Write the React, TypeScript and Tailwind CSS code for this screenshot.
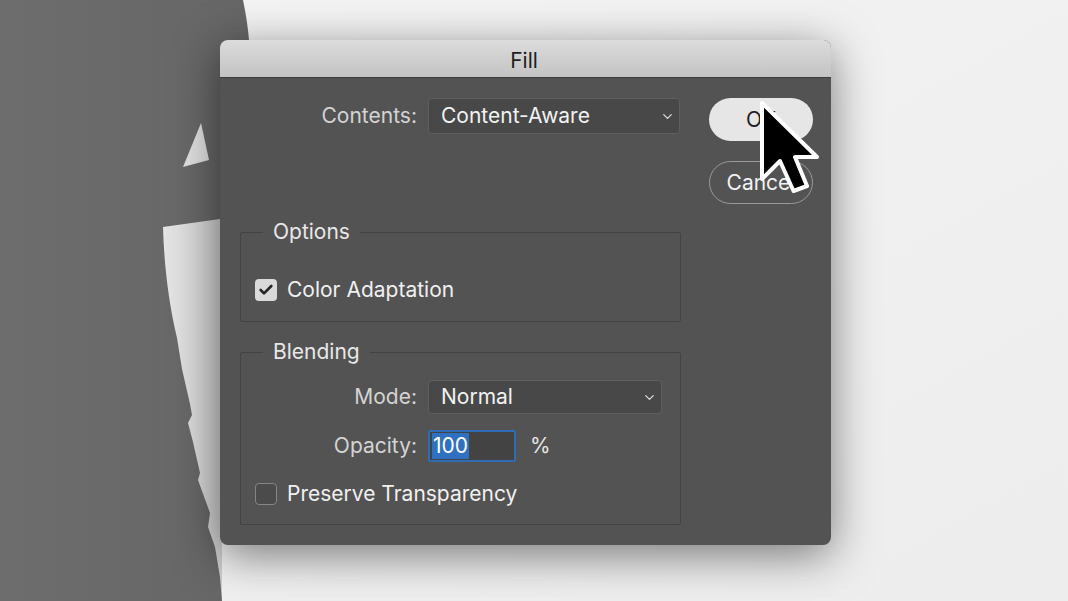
import { Check, ChevronDown } from 'lucide-react';

function Backdrop() {
  // photo behind the dialog: grey silhouette on a pale background
  return (
    <svg className="absolute inset-0" width={1068} height={601} viewBox="0 0 1068 601">
      <defs>
        <linearGradient id="bg" x1="0" y1="0" x2="1" y2="1">
          <stop offset="0" stopColor="#f4f4f4" />
          <stop offset="1" stopColor="#ededed" />
        </linearGradient>
        <linearGradient id="gap" x1="0" y1="0" x2="1" y2="0">
          <stop offset="0" stopColor="#e6e6e6" />
          <stop offset="1" stopColor="#cdcdcd" />
        </linearGradient>
        <linearGradient id="fig" x1="0" y1="0" x2="1" y2="0">
          <stop offset="0" stopColor="#6d6d6d" />
          <stop offset="1" stopColor="#666666" />
        </linearGradient>
      </defs>
      <rect width="1068" height="601" fill="url(#bg)" />
      <rect x="160" y="215" width="62" height="386" fill="url(#gap)" />
      <path
        fill="url(#fig)"
        d="M0 0 H243 C246 14 248 28 249 40 L249 219 L220 219 L163 227 C164 262 168 300 177 338 L182 369 L190 404 L192 415 L188 423 L193 442 L200 473 L198 480 L210 513 L208 527 L215 547 L220 577 L222 601 H0 Z"
      />
      <polygon points="201,123 183,167 209,160" fill="#dedede" />
    </svg>
  );
}

function Cursor() {
  return (
    <svg className="absolute left-[755px] top-[96px]" width={72} height={104} viewBox="0 0 72 104">
      <polygon
        points="7,7 7,83 25,65 38.5,95 52,90 40,61 62,61"
        fill="#000"
        stroke="#fff"
        strokeWidth={4}
        strokeLinejoin="round"
      />
    </svg>
  );
}

function Select({ value, width, height }: { value: string; width: string; height: string }) {
  return (
    <div
      className={`${width} ${height} flex items-center justify-between rounded-[4px] border border-[#5e5e5e] bg-[#484848] pl-[12px] pr-[4px] text-[21px] text-[#f2f2f2]`}
    >
      <span>{value}</span>
      <ChevronDown size={15} strokeWidth={2} className="text-[#dedede]" />
    </div>
  );
}

function Checkbox({ checked, label }: { checked: boolean; label: string }) {
  return (
    <div className="flex h-[22px] items-center gap-[10px] pl-[14px]">
      {checked ? (
        <div className="flex h-[22px] w-[22px] items-center justify-center rounded-[4px] bg-[#dadada]">
          <Check size={16} strokeWidth={4} className="text-[#262626]" />
        </div>
      ) : (
        <div className="h-[22px] w-[22px] rounded-[4px] border-[1.5px] border-[#858585] bg-[#4b4b4b]" />
      )}
      <span className="text-[21px] text-[#f0f0f0]">{label}</span>
    </div>
  );
}

function Group({ title, className, children }: { title: string; className: string; children: React.ReactNode }) {
  return (
    <fieldset className={`rounded-[2px] border border-[#434343] ${className}`}>
      <legend className="ml-[22px] px-[10px] text-[21px] leading-[24px] text-[#e8e8e8]">{title}</legend>
      {children}
    </fieldset>
  );
}

function FillDialog() {
  return (
    <div className="flex h-[505px] w-[611px] flex-col overflow-hidden rounded-[8px] bg-[#535353] shadow-[0_10px_45px_rgba(0,0,0,0.5)]">
      <div className="flex h-[38px] items-center justify-center border-b border-[#3c3c3c] bg-gradient-to-b from-[#dcdcdc] to-[#c3c3c3] pr-[3px] pt-[4px] text-[21px] text-[#1e1e1e]">
        Fill
      </div>

      <div className="flex pl-[20px] pt-[20px]">
        <div className="flex w-[441px] flex-col">
          <div className="flex h-[36px] items-center">
            <span className="w-[188px] pr-[11px] text-right text-[21px] text-[#d4d4d4]">Contents:</span>
            <Select value="Content-Aware" width="w-[252px]" height="h-[36px]" />
          </div>

          <Group title="Options" className="mt-[86px] pb-[20px]">
            <div className="mt-[35px]">
              <Checkbox checked label="Color Adaptation" />
            </div>
          </Group>

          <Group title="Blending" className="mt-[18px] pb-[19px]">
            <div className="mt-[16px] flex h-[34px] items-center">
              <span className="w-[187px] pr-[11px] text-right text-[21px] text-[#d4d4d4]">Mode:</span>
              <Select value="Normal" width="w-[234px]" height="h-[34px]" />
            </div>
            <div className="mt-[16px] flex h-[32px] items-center">
              <span className="w-[187px] pr-[11px] text-right text-[21px] text-[#d4d4d4]">Opacity:</span>
              <div className="flex h-[32px] w-[88px] items-center rounded-[2px] border-2 border-[#2e6db4] bg-[#434343] pl-[2px]">
                <span className="bg-[#2f70c0] px-[1px] text-[21px] leading-[26px] text-white">100</span>
              </div>
              <span className="ml-[14px] text-[21px] text-[#e6e6e6]">%</span>
            </div>
            <div className="mt-[21px]">
              <Checkbox checked={false} label="Preserve Transparency" />
            </div>
          </Group>
        </div>

        <div className="ml-[28px] flex flex-col gap-[20px]">
          <button className="h-[43px] w-[104px] rounded-full bg-[#e6e6e6] text-[21px] text-[#1e1e1e]">OK</button>
          <button className="h-[43px] w-[104px] rounded-full border-[1.5px] border-[#9a9a9a] text-[21px] text-[#f2f2f2]">
            Cancel
          </button>
        </div>
      </div>
    </div>
  );
}

export default function App() {
  return (
    <div className="relative h-[601px] w-[1068px] overflow-hidden bg-[#efefef] font-['Inter',sans-serif]">
      <Backdrop />
      <div className="relative pl-[220px] pt-[40px]">
        <FillDialog />
      </div>
      <Cursor />
    </div>
  );
}
